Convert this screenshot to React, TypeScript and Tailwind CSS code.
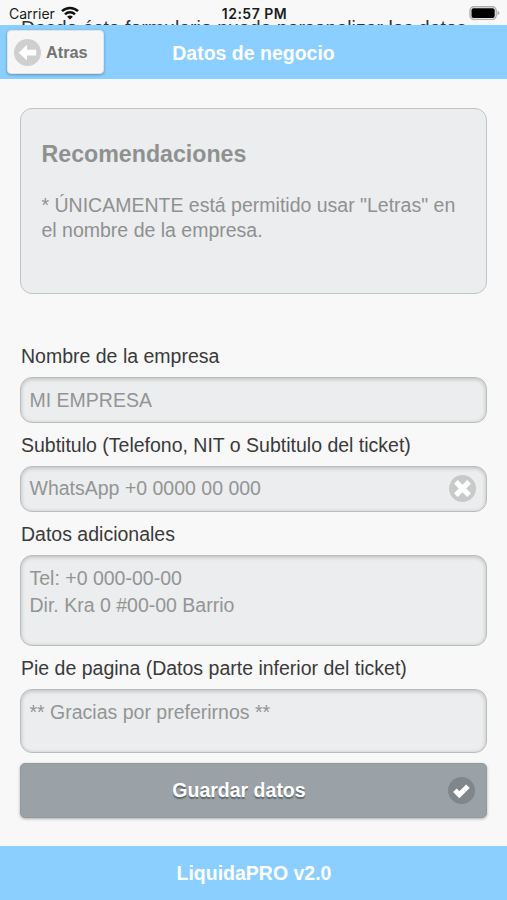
import type { ReactNode } from 'react';

function StatusBar() {
  return (
    <div className="relative h-[25px] shrink-0 overflow-hidden font-[Inter,sans-serif] text-[14px] leading-[27px] text-[#1c1c1c]">
      {/* Page text scrolled under the header */}
      <p className="absolute top-[16px] left-[21px] font-['Liberation_Sans',sans-serif] text-[19.5px] leading-6 whitespace-nowrap text-[#333]">
        Desde éste formulario puede personalizar los datos
      </p>
      <div className="relative grid grid-cols-[1fr_auto_1fr] items-start pr-[7px] pl-[9px]">
        <div className="flex items-start gap-[6px]">
          <span>Carrier</span>
          <svg className="mt-[6px] h-[14px] w-[18px]" viewBox="0 0 18 14" fill="none" stroke="#111" strokeWidth="2.5">
            <path d="M1 5.2a11.5 11.5 0 0 1 16 0" />
            <path d="M4 8.3a7.2 7.2 0 0 1 10 0" />
            <path d="M9 13.6 6.1 10.8a4.2 4.2 0 0 1 5.8 0z" fill="#111" stroke="none" />
          </svg>
        </div>
        <span className="text-[14px] font-semibold tracking-[0.5px]">12:57 PM</span>
        <svg className="mt-[6px] h-[14px] w-[31px] justify-self-end" viewBox="0 0 31 14">
          <rect x="1" y="0.8" width="26.2" height="12.6" rx="3.8" fill="#f8f8f8" stroke="#adadad" strokeWidth="1.4" />
          <rect x="2.5" y="2.3" width="23.2" height="9.6" rx="2" fill="#000" />
          <path d="M28.5 4.8q2 .8 2 2.3t-2 2.3z" fill="#adadad" />
        </svg>
      </div>
    </div>
  );
}

function Header() {
  return (
    <header className="relative flex h-[54px] shrink-0 items-center justify-center bg-[#8acfff]">
      <button className="absolute top-[5px] left-[7px] flex h-[44px] w-[97px] items-center gap-[5px] rounded-[4px] border border-[#e3e3e3] bg-[#f6f6f6] pl-[6px] text-[16.3px] font-bold text-[#737373] shadow-[0_1px_3px_rgba(0,0,0,0.3)]">
        <svg className="size-[27px]" viewBox="0 0 27 27">
          <circle cx="13.5" cy="13.5" r="13.5" fill="#cfcfcf" />
          <path d="M4.6 13.7 13 5.8v5h9.2v5.8H13v5z" fill="#fff" />
        </svg>
        Atras
      </button>
      <h1 className="pt-[2px] text-[19.5px] leading-6 font-bold text-white">Datos de negocio</h1>
    </header>
  );
}

function Field({ label, className, children }: { label: string; className: string; children: ReactNode }) {
  return (
    <div>
      <label className="block h-[33.5px] pl-px text-[19.5px] leading-6 text-[#3a3a3a]">{label}</label>
      <div
        className={`mb-[10px] rounded-[12px] border-[1.5px] border-[#b9bdbe] bg-[#ebedee] px-[8.5px] text-[19.5px] text-[#939595] shadow-[inset_0_1px_4px_rgba(0,0,0,0.22)] ${className}`}
      >
        {children}
      </div>
    </div>
  );
}

export default function App() {
  return (
    <div className="flex h-[900px] w-full flex-col overflow-hidden bg-[#f8f8f8] font-['Liberation_Sans',Arial,sans-serif]">
      <StatusBar />
      <Header />
      <main className="flex-1 px-5 pt-[29px]">
        <section className="mb-[49.5px] h-[186px] rounded-[12px] border-[1.5px] border-[#bfc5c5] bg-[#ebedee] px-[20.5px] pt-[31px] text-[#8f9191]">
          <h2 className="text-[23.2px] leading-7 font-bold">Recomendaciones</h2>
          <p className="mt-[25px] text-[19.5px] leading-[25px]">
            * ÚNICAMENTE está permitido usar "Letras" en
            <br />
            el nombre de la empresa.
          </p>
        </section>

        <Field label="Nombre de la empresa" className="flex h-[45.5px] items-center pt-px">
          MI EMPRESA
        </Field>
        <Field label="Subtitulo (Telefono, NIT o Subtitulo del ticket)" className="flex h-[45.5px] items-center justify-between">
          WhatsApp +0 0000 00 000
          <svg className="mr-[2px] size-[27px]" viewBox="0 0 27 27">
            <circle cx="13.5" cy="13.5" r="13.5" fill="#c8caca" />
            <path d="m6.9 6.9 13.2 13.2M20.1 6.9 6.9 20.1" stroke="#fff" strokeWidth="5.2" />
          </svg>
        </Field>
        <Field label="Datos adicionales" className="h-[90.5px] pt-[8.5px] leading-[27px]">
          Tel: +0 000-00-00
          <br />
          Dir. Kra 0 #00-00 Barrio
        </Field>
        <Field label="Pie de pagina (Datos parte inferior del ticket)" className="h-[63.5px] pt-[8.5px] leading-[27px]">
          ** Gracias por preferirnos **
        </Field>

        <button className="relative flex h-[55px] w-full items-center justify-center rounded-[5px] border border-[#929a9e] bg-[#9aa2a7] pt-px pr-[29px] text-[19.5px] font-bold text-white shadow-[0_1px_3px_rgba(0,0,0,0.3)] [text-shadow:0_1.5px_1px_#62686c]">
          Guardar datos
          <svg className="absolute top-[13px] right-[11px] size-[27px]" viewBox="0 0 27 27">
            <circle cx="13.5" cy="13.5" r="13.5" fill="#80878b" />
            <path d="m6.9 13.2 4.4 4.5 8.6-8.4" fill="none" stroke="#fff" strokeWidth="5" />
          </svg>
        </button>
      </main>
      <footer className="flex h-[54px] shrink-0 items-center justify-center bg-[#8acfff] pt-px pl-px text-[19.5px] font-bold text-white">
        LiquidaPRO v2.0
      </footer>
    </div>
  );
}
